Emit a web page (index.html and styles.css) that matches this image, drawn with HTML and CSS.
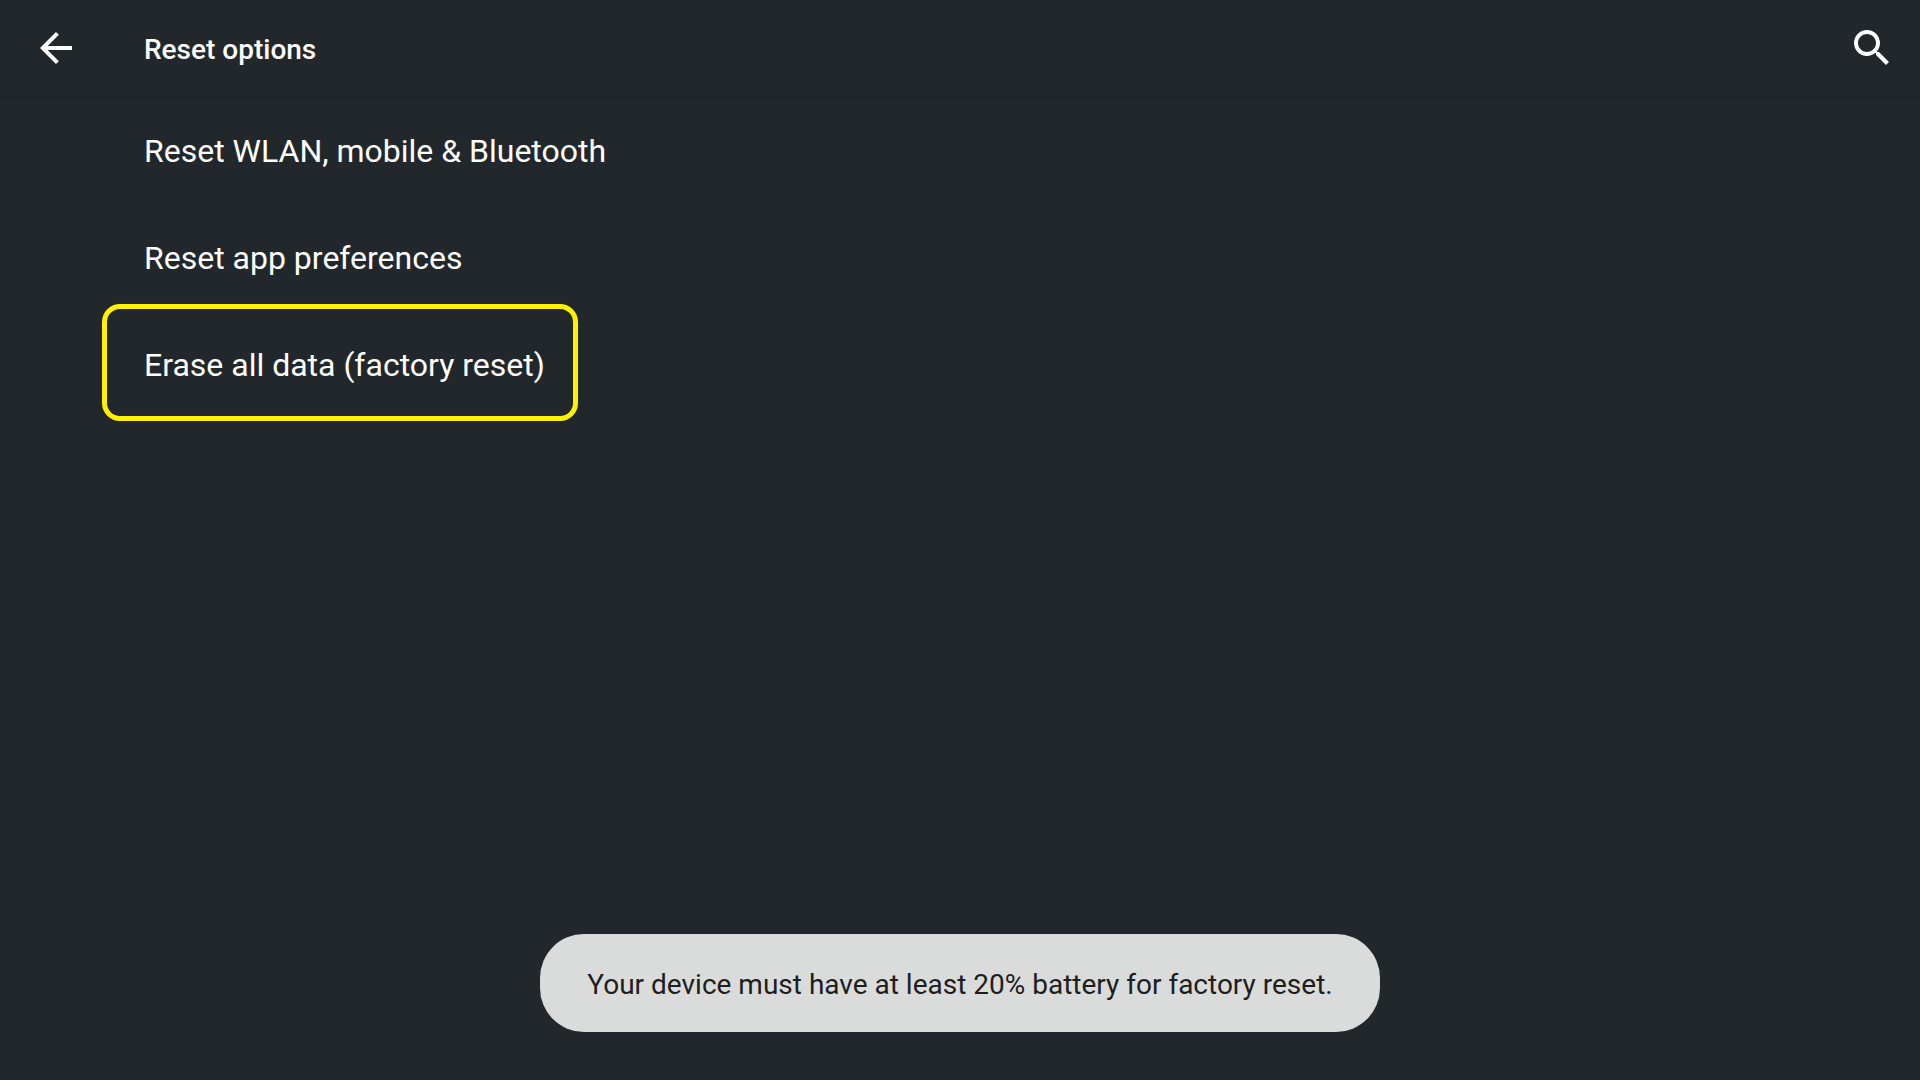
FILE: index.html
```html
<!DOCTYPE html>
<html lang="en">
  <head>
    <meta charset="utf-8">
    <title>Reset options</title>
    <link rel="stylesheet" href="styles.css">
  </head>
  <body>
    <header class="app-bar">
      <button class="icon-button" aria-label="Back">
        <svg viewBox="0 0 24 24"><path d="M20 11H7.83l5.59-5.59L12 4l-8 8 8 8 1.41-1.41L7.83 13H20v-2z"/></svg>
      </button>
      <h1>Reset options</h1>
      <button class="icon-button search" aria-label="Search">
        <svg viewBox="0 0 24 24"><path d="M15.5 14h-.79l-.28-.27C15.41 12.59 16 11.11 16 9.5 16 5.91 13.09 3 9.5 3S3 5.91 3 9.5 5.91 16 9.5 16c1.61 0 3.09-.59 4.23-1.57l.27.28v.79l5 4.99L20.49 19l-4.99-5zm-6 0C7.01 14 5 11.99 5 9.5S7.01 5 9.5 5 14 7.01 14 9.5 11.99 14 9.5 14z"/></svg>
      </button>
    </header>
    <main class="options">
      <button class="option">Reset WLAN, mobile &amp; Bluetooth</button>
      <button class="option">Reset app preferences</button>
      <button class="option highlight">Erase all data (factory reset)</button>
    </main>
    <div class="toast" role="status">Your device must have at least 20% battery for factory reset.</div>
  </body>
</html>
```

FILE: styles.css
```css
* {
  box-sizing: border-box;
}
body {
  margin: 0;
  min-height: 100vh;
  display: flex;
  flex-direction: column;
  font-family: Roboto, sans-serif;
  color: #fff;
  background-color: #22272b;
}
button {
  border: none;
  padding: 0;
  background: none;
  font: inherit;
  color: inherit;
  cursor: pointer;
}
.app-bar {
  display: flex;
  align-items: center;
  height: 96px;
  padding: 0 24px 0 32px;
  box-shadow: 0 1px 4px rgba(0, 0, 0, 0.15);
}
.app-bar h1 {
  margin: 0 0 0 64px;
  padding-top: 2px;
  font-size: 28px;
  font-weight: 500;
}
.icon-button {
  width: 48px;
  height: 48px;
}
.icon-button svg {
  display: block;
  width: 100%;
  fill: currentColor;
}
.search {
  margin-left: auto;
}
.options {
  flex: 1;
  display: flex;
  flex-direction: column;
  align-items: flex-start;
  padding: 1px 102px;
}
.option {
  height: 107px;
  padding: 0 28px 0 42px;
  font-size: 32px;
  text-align: left;
}
/* frame reaches up into the row above */
.highlight {
  height: 117px;
  margin-top: -7px;
  padding: 4px 28px 0 37px;
  border: 5px solid #fff200;
  border-radius: 18px;
}
.toast {
  align-self: center;
  margin-bottom: 48px;
  padding: 34px 47px 30px;
  border-radius: 44px;
  font-size: 28px;
  line-height: 34px;
  color: #1e1e1e;
  background-color: #dadcdb;
}
```
